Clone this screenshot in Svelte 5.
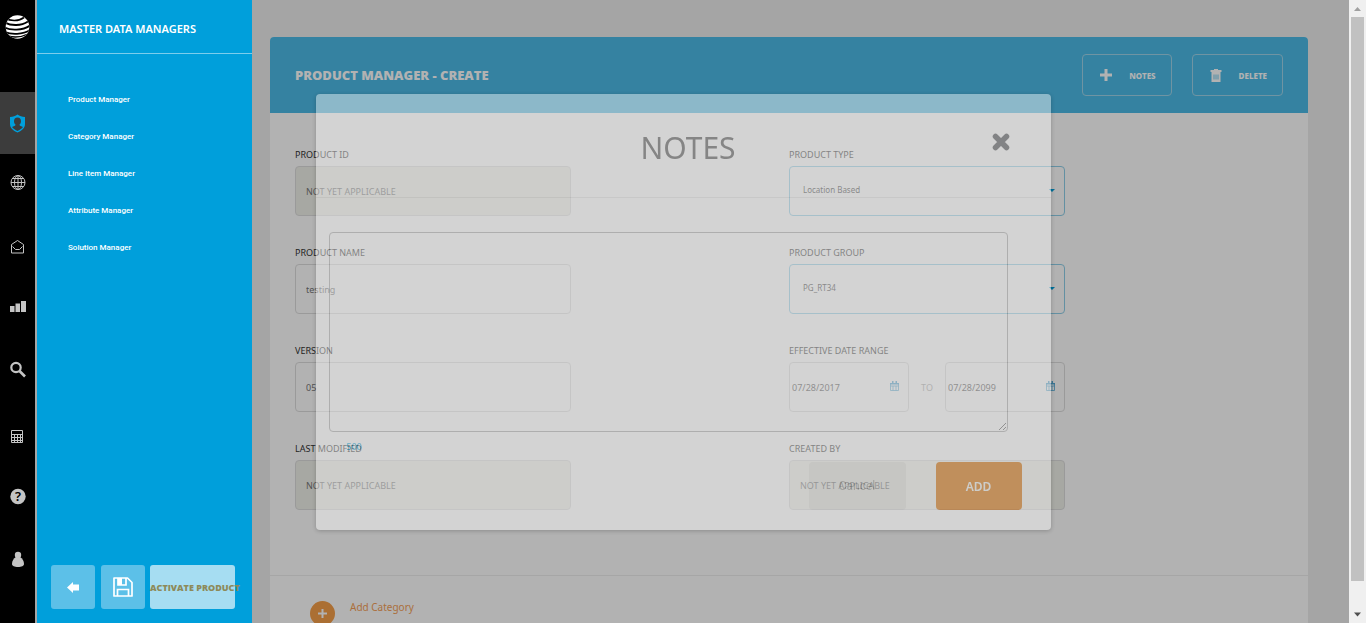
<script>
  const managers = ['Product Manager', 'Category Manager', 'Line Item Manager', 'Attribute Manager', 'Solution Manager'];
  const rail = ['Admin', 'Network', 'Inbox', 'Reports', 'Search', 'Calculator', 'Help', 'Profile'];
</script>

{#snippet calendar()}
  <svg class="cal" width="9" height="10" viewBox="0 0 9 10" aria-hidden="true">
    <path d="M.5 2.500h8v7h-8z M.5 5h8 M3 5v4.500 M6 5v4.500" fill="none" stroke="currentColor" stroke-width=".8" />
    <path d="M0 2h9v1.500H0z M2 0h1.500v2H2z M5.500 0H7v2H5.500z" fill="currentColor" />
  </svg>
{/snippet}

<div class="app">
  <nav class="rail" aria-label="Main">
    <a class="logo" href="#home" aria-label="Home">
      <svg width="35" height="92" viewBox="0 0 35 92">
        <clipPath id="ball"><circle cx="17.500" cy="27" r="11.800" /></clipPath>
        <g clip-path="url(#ball)">
          <rect x="5" y="15" width="25" height="24" fill="#fff" />
          <g fill="none" stroke="#000">
            <path d="M5 18c5 3.400 14 3.400 19-.5" stroke-width="1.700" />
            <path d="M5 22.500c6 3.600 16 3.600 23-1" stroke-width="2" />
            <path d="M4 27.300c6 3.400 19 3.400 26-1.800" stroke-width="1.900" />
            <path d="M5 32c6 2.800 18 2.800 25-2" stroke-width="1.700" />
            <path d="M8 36c6 1.600 13 1.400 20-2" stroke-width="1.300" />
          </g>
        </g>
      </svg>
    </a>
    {#each rail as name, i}
      <a class="tile" class:active={i === 0} href="#{name.toLowerCase()}" aria-label={name}>
        <svg width="35" height="62" viewBox="0 0 35 62" fill="none" stroke="#c4c4c4">
          {#if i === 0}
            <path d="M17.500 22.500c2 1.700 4.500 2.400 7.500 2.500v7c0 4-3 6.500-7.500 8.500-4.500-2-7.500-4.500-7.500-8.500v-7c3-.1 5.500-.8 7.500-2.500z" fill="#009fdb" stroke="none" />
            <path d="M17.500 25.500c2.300 0 3.500 1.500 3.500 3.700 0 1.500-.6 2.700-1.500 3.400 0 1 .5 1.500 3.500 2.400-1.300 1.800-3.500 3-5.500 4-2-1-4.200-2.200-5.500-4 3-.9 3.500-1.400 3.500-2.400-.9-.7-1.500-1.900-1.500-3.400 0-2.200 1.200-3.700 3.500-3.700z" fill="#3c3c3c" stroke="none" />
          {:else if i === 1}
            <circle cx="18" cy="28.500" r="7" /><ellipse cx="18" cy="28.500" rx="3.500" ry="7" />
            <path d="M18 21.500v14M11 28.500h14M12 24.500h12M12 32.500h12" />
          {:else if i === 2}
            <path d="M11.500 28.500l6-4 6 4v8.500h-12z" stroke-linejoin="round" />
            <path d="M12.500 30.500l3 3h4l3-3" />
          {:else if i === 3}
            <path d="M10 28h4.500v6H10zM15.500 25.500H20V34h-4.500zM21 23h5v11h-5z" fill="#c4c4c4" stroke="none" />
          {:else if i === 4}
            <circle cx="16" cy="27.500" r="4.700" stroke-width="2.200" /><path d="M19.500 31l5.500 5.500" stroke-width="2.600" />
          {:else if i === 5}
            <path d="M11.500 28.500h11v12h-11zM11.500 32.500h11M11.500 35.500h11M11.500 38.500h11M14.500 32.500v8M17.500 32.500v8M20.500 32.500v8" />
          {:else if i === 6}
            <circle cx="18" cy="32.500" r="7.700" fill="#c4c4c4" stroke="none" />
            <text x="18" y="37" text-anchor="middle" class="mark">?</text>
          {:else}
            <circle cx="18" cy="29" r="3.200" fill="#c4c4c4" stroke="none" />
            <path d="M16 31h4c2.500 1.500 4 4 4 7 0 2-2.500 3-6 3s-6-1-6-3c0-3 1.500-5.500 4-7z" fill="#c4c4c4" stroke="none" />
          {/if}
        </svg>
      </a>
    {/each}
  </nav>

  <aside class="side">
    <h2>MASTER DATA MANAGERS</h2>
    <ul>
      {#each managers as m}<li><a href="#manager">{m}</a></li>{/each}
    </ul>
    <div class="tools">
      <button class="sq" aria-label="Back">
        <svg width="12" height="11" viewBox="0 0 12 11"><path d="M0 5.500L6 0v2.500h6v6H6V11z" fill="#fff" /></svg>
      </button>
      <button class="sq" aria-label="Save">
        <svg width="20" height="20" viewBox="0 0 20 20" fill="none" stroke="#fff" stroke-width="1.700">
          <path d="M1 1h13.500L19 5.500V19H1z" stroke-linejoin="round" /><path d="M4.500 19v-6.500h11V19" />
          <path d="M5 1v7h8V1" /><path d="M5 1h4v7H5z" fill="#fff" stroke="none" />
        </svg>
      </button>
      <button class="activate">ACTIVATE PRODUCT</button>
    </div>
  </aside>

  <main>
    <section class="card">
      <header>
        <h1>PRODUCT MANAGER - CREATE</h1>
        <button><svg width="12" height="12" viewBox="0 0 12 12"><path d="M6 0v12M0 6h12" stroke="#fff" stroke-width="3" /></svg>NOTES</button>
        <button>
          <svg width="12" height="13" viewBox="0 0 12 13"><path d="M4 0h4v1h3.500v2H.5V1H4z M1.500 3h9v10h-9z" fill="#fff" /><path d="M4 5.500v5M6 5.500v5M8 5.500v5" stroke="#4cbbe7" stroke-width=".8" /></svg>DELETE
        </button>
      </header>
      <form>
        <div class="field"><label for="pid">PRODUCT ID</label><input id="pid" disabled value="NOT YET APPLICABLE" /></div>
        <div class="field">
          <label for="ptype">PRODUCT TYPE</label>
          <div class="pick"><select id="ptype"><option>Location Based</option></select><i></i></div>
        </div>
        <div class="field"><label for="pname">PRODUCT NAME</label><input id="pname" value="testing" /></div>
        <div class="field">
          <label for="pgroup">PRODUCT GROUP</label>
          <div class="pick"><select id="pgroup"><option>PG_RT34</option></select><i></i></div>
        </div>
        <div class="field"><label for="ver">VERSION</label><input id="ver" value="05" /></div>
        <div class="field">
          <label for="from">EFFECTIVE DATE RANGE</label>
          <div class="range">
            <div class="date"><input id="from" value="07/28/2017" />{@render calendar()}</div>
            <span>TO</span>
            <div class="date"><input aria-label="End date" value="07/28/2099" />{@render calendar()}</div>
          </div>
        </div>
        <div class="field"><label for="mod">LAST MODIFIED</label><input id="mod" disabled value="NOT YET APPLICABLE" /></div>
        <div class="field"><label for="by">CREATED BY</label><input id="by" disabled value="NOT YET APPLICABLE" /></div>
      </form>
      <footer>
        <button class="add-category">
          <svg width="25" height="25" viewBox="0 0 25 25"><circle cx="12.500" cy="12.500" r="12.500" fill="#f59f49" /><path d="M12.500 8v9M8 12.500h9" stroke="#fff" stroke-width="2" /></svg>
          <span>Add Category</span>
        </button>
      </footer>
    </section>
    <div class="backdrop"></div>
  </main>

  <div class="scrollbar" aria-hidden="true">
    <svg width="17" height="17" viewBox="0 0 17 17"><path d="M5 11l3.500-4 3.500 4z" fill="#a0a0a0" /></svg>
    <div class="thumb"></div>
    <svg width="17" height="17" viewBox="0 0 17 17"><path d="M5 6.500h7l-3.500 4z" fill="#505050" /></svg>
  </div>

  <div class="overlay">
    <div class="modal" role="dialog" aria-labelledby="notes-title">
      <div class="modal-head">
        <h2 id="notes-title">NOTES</h2>
        <button class="close" aria-label="Close">
          <svg width="18" height="18" viewBox="0 0 18 18"><path d="M3.500 3.500l11 11M14.500 3.500l-11 11" stroke="#45474b" stroke-width="5.500" stroke-linecap="round" /></svg>
        </button>
      </div>
      <div class="modal-body">
        <textarea aria-label="Notes"></textarea>
        <p>500</p>
        <div class="actions"><button class="cancel">Cancel</button><button class="add">ADD</button></div>
      </div>
    </div>
  </div>
</div>

<style>
  :global(body) { overflow: hidden; }
  * { box-sizing: border-box; margin: 0; }
  .app { display: flex; height: 100vh; font-family: "Noto Sans", "Open Sans", sans-serif; color: #333; }
  button, input, select, textarea { font: inherit; color: inherit; }
  button { padding: 0; border: 0; display: flex; align-items: center; justify-content: center; }
  a { text-decoration: none; color: inherit; }
  svg { display: block; flex: none; }

  .rail { flex: none; width: 37px; background: #000; border-right: 2px solid #a5a5a5; }
  .tile { display: block; }
  .tile.active { background: #3c3c3c; }
  .mark { font-size: 13px; font-weight: 600; fill: #000; stroke: none; }

  .side { flex: none; width: 215px; background: #009fdb; color: #fff; display: flex; flex-direction: column; }
  .side h2 { height: 54px; padding: 4px 22px 0; border-bottom: 1px solid #7dcdec; font-size: 11px; line-height: 50px; font-weight: 600; white-space: nowrap; }
  ul { flex: 1; list-style: none; padding: 27px 31px; }
  li { font-family: Roboto, sans-serif; font-size: 8px; line-height: 37px; font-weight: 500; }
  .tools { display: flex; padding: 0 14px 14px; }
  .sq { width: 44px; height: 44px; margin-right: 6px; border-radius: 3px; background: #5cc0e8; }
  .sq + .sq { margin-right: 5px; }
  .activate { width: 85px; height: 44px; border-radius: 3px; background: #a6ddf2; color: #8d8a5a; font-family: "Open Sans", sans-serif; font-size: 9px; font-weight: 800; white-space: nowrap; justify-content: flex-start; }

  main { flex: 1; position: relative; overflow: hidden; background: #ececec; padding: 37px 41px 0 18px; }
  .backdrop { position: absolute; inset: 0; background: rgba(0, 0, 0, .3); }
  .card { background: #fff; border-radius: 4px 4px 0 0; }
  header { height: 76px; padding: 0 25px; display: flex; align-items: center; gap: 20px; background: #4cbbe7; border-radius: 4px 4px 0 0; color: #fff; }
  h1 { flex: 1; font-family: "Open Sans", sans-serif; font-size: 13px; font-weight: 800; }
  header button { height: 42px; padding: 0 15px 0 17px; gap: 17px; border: 1px solid #a0d5ea; border-radius: 4px; background: none; color: #fff; font-size: 8px; font-weight: 800; }

  form { display: grid; grid-template-columns: 1fr 1fr; row-gap: 32px; padding: 37px 25px 65px; }
  .field { width: 276px; max-width: 100%; }
  label { display: block; height: 16px; font-size: 9px; line-height: 10px; }
  input, select { display: block; width: 100%; height: 50px; padding: 0 10px; border: 1px solid #ddd; border-radius: 4px; background: none; font-size: 9px; color: #777; }
  input:disabled { background: #f0f1ea; }
  .pick { position: relative; }
  .pick select { appearance: none; border-color: #8fcfe8; padding: 0 13px 3px; font-size: 8px; color: #444; }
  .pick i { position: absolute; right: 10px; top: 23px; border: 3px solid transparent; border-top-color: #009fdb; border-bottom: 0; }
  .range { display: flex; align-items: center; justify-content: space-between; font-size: 9px; color: #aaa; }
  .date { position: relative; width: 120px; }
  .date input { padding: 0 2px; color: #555; }
  .cal { position: absolute; right: 10px; top: 19px; color: #52a8d4; }
  footer { height: 120px; border-top: 1px solid #eee; padding: 25px 40px; }
  .add-category { background: none; align-items: flex-start; gap: 15px; color: #f59f57; font-size: 10px; line-height: 12px; }

  .scrollbar { flex: none; width: 17px; background: #f0f0f0; display: flex; flex-direction: column; }
  .thumb { flex: 1; margin: 0 2px 25px; background: #c1c1c1; }

  .overlay { position: fixed; inset: 0; display: flex; justify-content: center; align-items: flex-start; padding-top: 94px; }
  .modal { width: 735px; background: #fff; border-radius: 4px; opacity: .43; box-shadow: 0 1px 4px rgba(0, 0, 0, .5); }
  .modal-head { height: 104px; border-bottom: 1px solid #e5e5e5; padding: 34px 41px 0 51px; display: flex; align-items: flex-start; }
  .modal h2 { flex: 1; padding-left: 18px; text-align: center; font-size: 30px; line-height: 40px; font-weight: 400; color: #4a4a4a; }
  .close { background: none; padding-top: 5px; }
  .modal-body { padding: 34px 13px 20px; }
  textarea { display: block; width: 679px; max-width: 100%; height: 200px; background: none; border: 1px solid #aaa; border-radius: 4px; }
  .modal-body p { padding: 9px 18px; height: 30px; font-size: 9px; line-height: 12px; font-weight: 500; color: #009fdb; }
  .actions { display: flex; justify-content: flex-end; gap: 30px; padding-right: 16px; }
  .actions button { height: 48px; border-radius: 4px; }
  .cancel { width: 97px; background: #eee; color: #999; font-family: Roboto, sans-serif; font-size: 12px; }
  .add { width: 86px; background: #e07000; color: #fff; font-size: 12px; font-weight: 600; }
</style>
